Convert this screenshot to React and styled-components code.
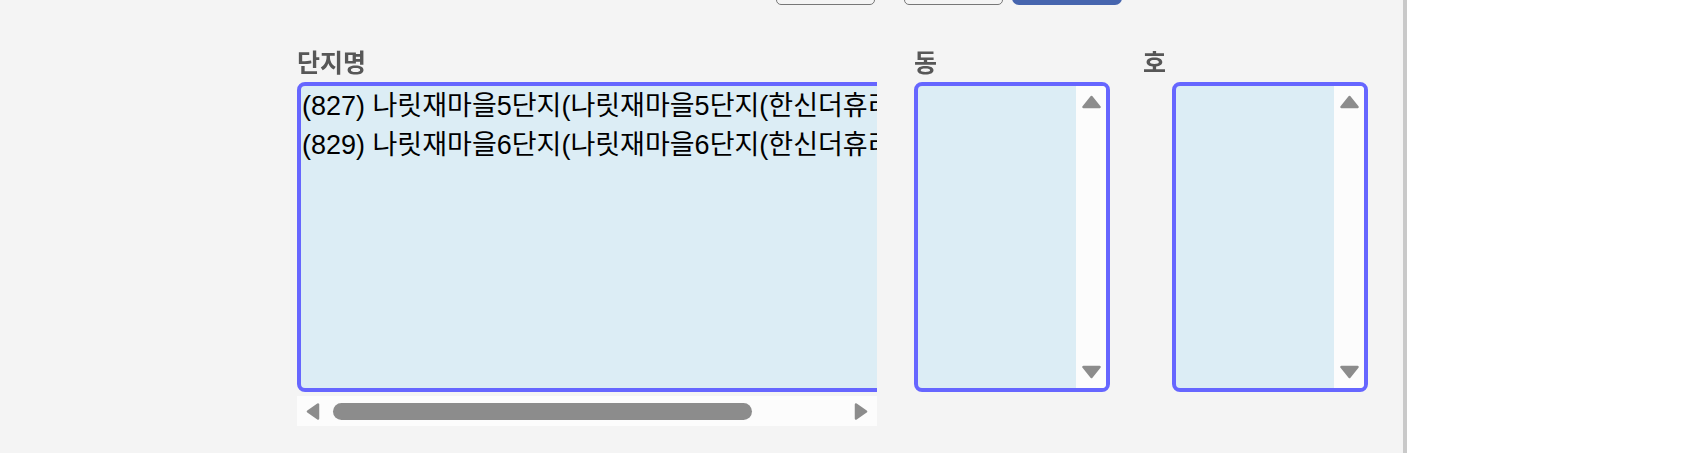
import React from "react";
import styled, {createGlobalStyle} from "styled-components";

const GlobalStyle = createGlobalStyle`
    html, body {
        margin: 0;
        padding: 0;
        background: #ffffff;
        overflow: hidden;
    }
    * {
        box-sizing: border-box;
    }
`;

const Page = styled.div`
    display: flex;
    height: 100vh;
    font-family: "Liberation Sans", "Noto Sans CJK KR", sans-serif;
`;

const Panel = styled.main`
    flex: none;
    width: 1407px;
    background: #f4f4f4;
    border-right: 4px solid #c9c9c9;
    overflow: hidden;
`;

const Toolbar = styled.div`
    display: flex;
    justify-content: flex-end;
    height: 36px;
    margin-top: -31px;
    padding-right: 281px;
`;

const ToolButton = styled.button`
    width: ${p => p.$width}px;
    height: 36px;
    margin-right: ${p => p.$space || 0}px;
    border: ${p => p.$primary ? "none" : "1.5px solid #777"};
    border-radius: ${p => p.$primary ? 7 : 5}px;
    background: ${p => p.$primary ? "#4665ae" : "transparent"};
    filter: blur(0.4px);
`;

const Fields = styled.div`
    display: flex;
    margin-top: 41px;
    padding-left: 297px;
`;

const Field = styled.div`
    display: flex;
    flex-direction: column;
    width: ${p => p.$width}px;
    margin-left: ${p => p.$offset || 0}px;
`;

const Label = styled.div`
    height: 30px;
    margin-bottom: 6px;
    font-family: "Noto Sans CJK KR", sans-serif;
    font-size: 25px;
    font-weight: bold;
    line-height: 30px;
    color: #575757;
    white-space: nowrap;
    filter: blur(0.7px);
`;

const Clip = styled.div`
    width: 580px;
    overflow: hidden;
`;

const ListBox = styled.div`
    display: flex;
    width: ${p => p.$width}px;
    height: 310px;
    margin-left: ${p => p.$indent || 0}px;
    border: 4px solid #6666ff;
    border-radius: 8px;
    background: #dcedf5;
    overflow: hidden;
`;

const Options = styled.div`
    flex: 1;
    padding-top: 1px;
`;

const Option = styled.div`
    padding-left: 1px;
    font-size: 27px;
    line-height: 39px;
    color: #000;
    white-space: nowrap;
`;

const VScroll = styled.div`
    display: flex;
    flex-direction: column;
    align-items: center;
    justify-content: space-between;
    flex: none;
    width: 30px;
    padding: 9px 0;
    background: #fcfcfc;
`;

const HScroll = styled.div`
    display: flex;
    align-items: center;
    width: 580px;
    height: 30px;
    margin-top: 4px;
    padding: 0 9px;
    background: #fcfcfc;
`;

const Thumb = styled.div`
    width: 419px;
    height: 17px;
    margin-left: 13px;
    margin-right: auto;
    border-radius: 8.5px;
    background: #8c8c8c;
`;

const arrows = {
    up: {w: 19, h: 14, pts: "9.5,2 17.5,12 1.5,12"},
    down: {w: 19, h: 14, pts: "1.5,2 17.5,2 9.5,12"},
    left: {w: 14, h: 17, pts: "2,8.5 12,1.5 12,15.5"},
    right: {w: 14, h: 17, pts: "2,1.5 12,8.5 2,15.5"},
};

const Arrow = ({dir}) => {
    const a = arrows[dir];
    return (
        <svg width={a.w} height={a.h} viewBox={`0 0 ${a.w} ${a.h}`}>
            <polygon points={a.pts} fill="#8c8c8c" stroke="#8c8c8c" strokeWidth="2.5" strokeLinejoin="round"/>
        </svg>
    );
};

const complexes = [
    "(827) 나릿재마을5단지(나릿재마을5단지(한신더휴리버파크))",
    "(829) 나릿재마을6단지(나릿재마을6단지(한신더휴리버파크))",
];

const SmallList = ({indent}) => (
    <ListBox $width={196} $indent={indent}>
        <Options/>
        <VScroll>
            <Arrow dir="up"/>
            <Arrow dir="down"/>
        </VScroll>
    </ListBox>
);

const App = () => {
    return (
        <Page>
            <GlobalStyle/>
            <Panel>
                <Toolbar>
                    <ToolButton $width={99} $space={29}/>
                    <ToolButton $width={99} $space={9}/>
                    <ToolButton $width={110} $primary/>
                </Toolbar>
                <Fields>
                    <Field $width={580}>
                        <Label>단지명</Label>
                        <Clip>
                            <ListBox $width={900}>
                                <Options>
                                    {complexes.map(c => <Option key={c}>{c}</Option>)}
                                </Options>
                            </ListBox>
                        </Clip>
                        <HScroll>
                            <Arrow dir="left"/>
                            <Thumb/>
                            <Arrow dir="right"/>
                        </HScroll>
                    </Field>
                    <Field $width={196} $offset={37}>
                        <Label>동</Label>
                        <SmallList/>
                    </Field>
                    <Field $width={225} $offset={33}>
                        <Label>호</Label>
                        <SmallList indent={29}/>
                    </Field>
                </Fields>
            </Panel>
        </Page>
    );
};

export default App;
